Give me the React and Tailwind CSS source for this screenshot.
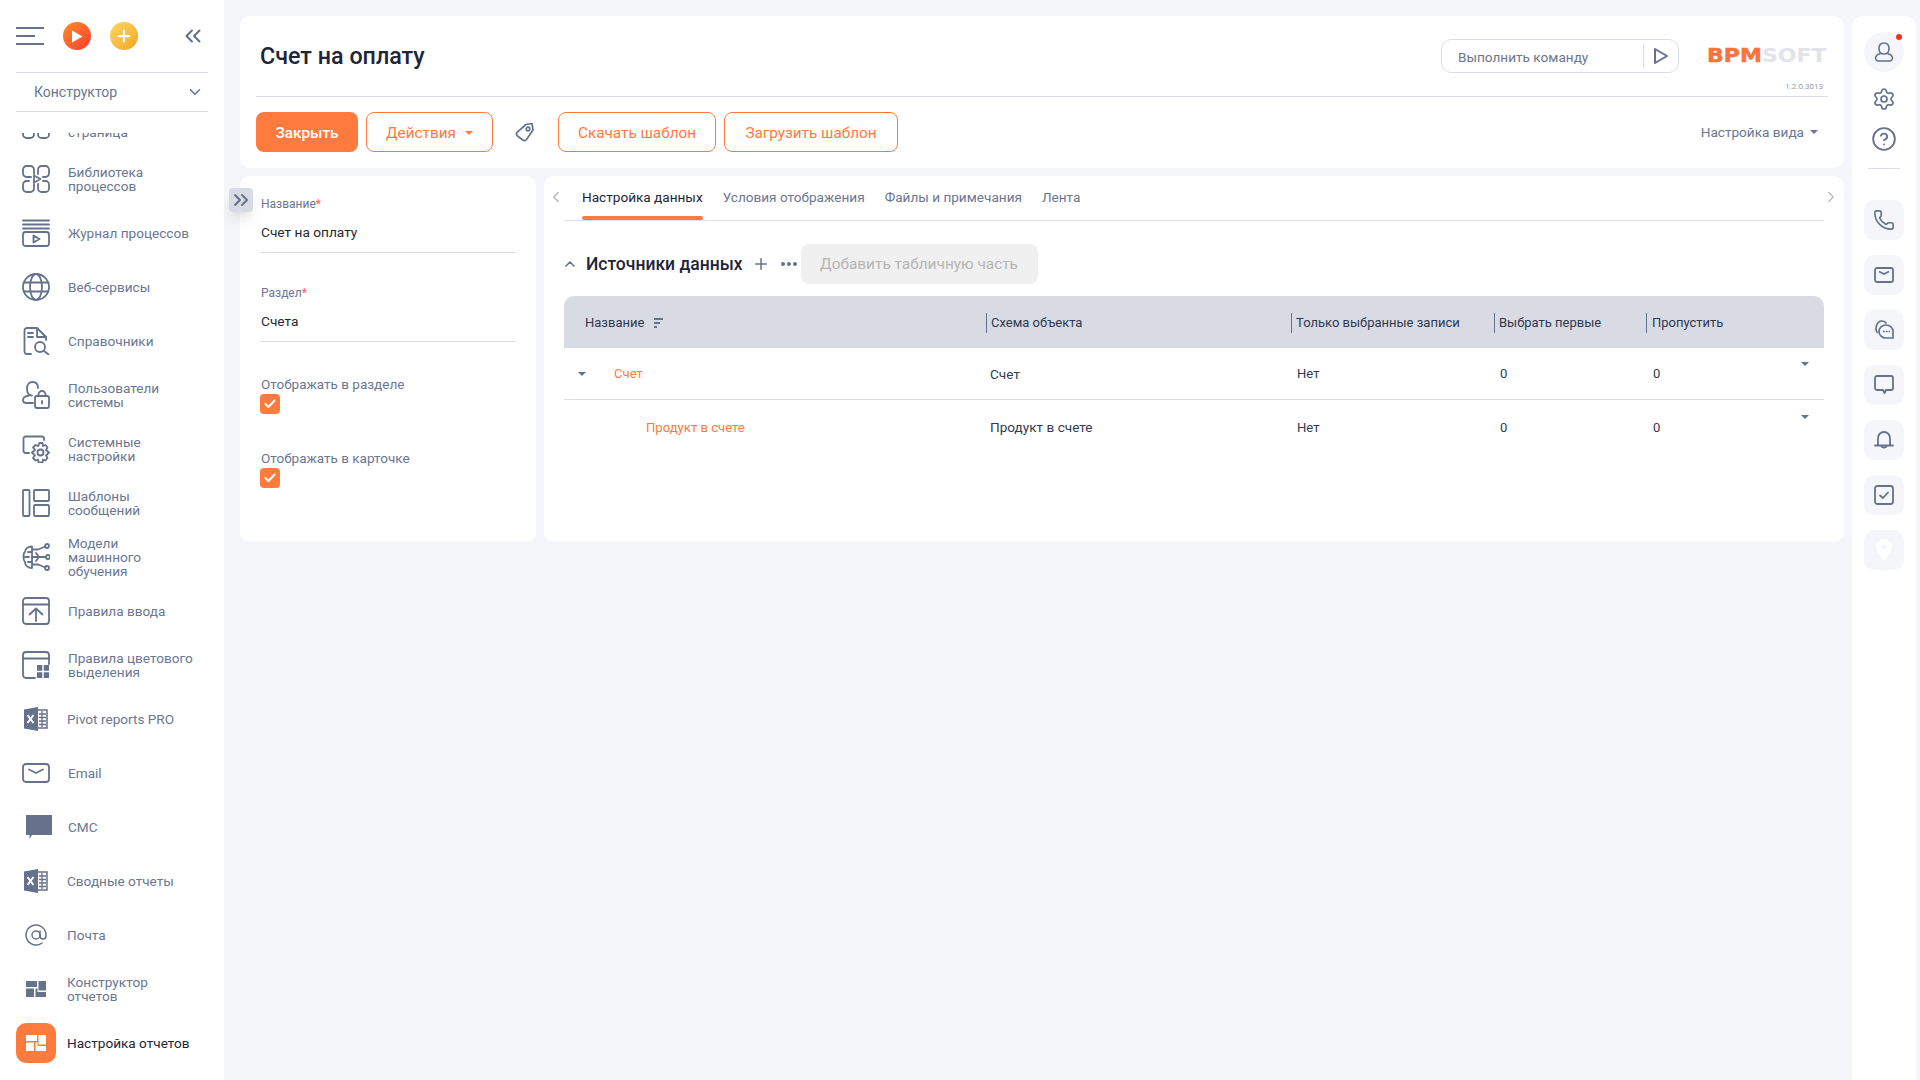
import { AtSign, ChevronDown, ChevronLeft, ChevronRight, ChevronUp, ChevronsLeft, ChevronsRight, Plus, Settings, CircleHelp, Phone } from "lucide-react";

const stroke = "#66718b";

function Ic({ children, className = "", size = 28 }) {
  return (
    <svg width={size} height={size} viewBox="0 0 28 28" fill="none" stroke="currentColor" strokeWidth="1.8" strokeLinecap="round" strokeLinejoin="round" className={className}>
      {children}
    </svg>
  );
}

const LibIcon = () => (
  <Ic>
    <path d="M12 9V4.5A3.5 3.5 0 0 0 8.500 1H4.500A3.500 3.500 0 0 0 1 4.500V8.500A3.500 3.500 0 0 0 4.500 12H9" />
    <path d="M16 9V4.500A3.500 3.500 0 0 1 19.500 1H23.500A3.500 3.500 0 0 1 27 4.500V8.500A3.500 3.500 0 0 1 23.500 12H21" />
    <path d="M7 16H4.500A3.500 3.500 0 0 0 1 19.500V23.500A3.500 3.500 0 0 0 4.500 27H8.500A3.500 3.500 0 0 0 12 23.500V19" />
    <path d="M21 16H23.500A3.500 3.500 0 0 1 27 19.500V23.500A3.500 3.500 0 0 1 23.500 27H19.500A3.500 3.500 0 0 1 16 23.500V19" />
    <path d="M12 10.500L18.500 14L12 17.500Z" />
  </Ic>
);
const LogIcon = () => (
  <Ic>
    <path d="M1 1.500H27M1 5.500H27M1 9.500H27" />
    <rect x="1" y="13" width="26" height="14" rx="2.500" />
    <path d="M11.500 16.500L17.500 20L11.500 23.500Z" />
  </Ic>
);
const GlobeIcon = () => (
  <Ic>
    <circle cx="14" cy="14" r="13" />
    <ellipse cx="14" cy="14" rx="6" ry="13" />
    <path d="M2 9.500H26M2 18.500H26" />
  </Ic>
);
const RefIcon = () => (
  <Ic>
    <path d="M9 27H5A2.500 2.500 0 0 1 2.500 24.500V3.500A2.500 2.500 0 0 1 5 1H15L24 10V13" />
    <path d="M15 1V10H24M6 6H11M6 10H11" />
    <circle cx="18" cy="20" r="5" />
    <path d="M22 24L26.500 27.500" />
  </Ic>
);
const UsersIcon = () => (
  <Ic>
    <path d="M10 14.500C6.500 14.500 5 11.500 5 7.500C5 3.500 7 1 10.500 1C14 1 16 3.500 16 7" />
    <path d="M7 14.500C4 15 1 16.500 1 19C1 21 3 22 5 22H11" />
    <rect x="13" y="15" width="14" height="12" rx="2" />
    <path d="M16.500 15V13.500A3.500 3.500 0 0 1 23.500 13.500V15" />
    <path d="M20 20V22.500" />
  </Ic>
);
const SysIcon = () => (
  <Ic>
    <path d="M7 18H3.500A2 2 0 0 1 1.500 16V3.500A2 2 0 0 1 3.500 1.500H20A2 2 0 0 1 22 3.500V5" />
    <path d="M17.500 8L20.500 8L21 11L23.500 10L25.500 12.500L24 15L27 17.500L24 20.500L25.500 23L23.500 25.500L21 24.500L20.500 27.500H16.500L16 24.500L13.500 25.500L11 23L13 20.500L10 17.500L13 15L11 12.500L13.500 10L16 11Z" />
    <circle cx="18.500" cy="17.500" r="3" />
  </Ic>
);
const TplIcon = () => (
  <Ic>
    <rect x="1" y="1" width="6.500" height="26" rx="1" />
    <rect x="12" y="1" width="15" height="11" rx="1" />
    <rect x="12" y="16" width="15" height="11" rx="1" />
  </Ic>
);
const MlIcon = () => (
  <Ic>
    <path d="M10 3.500C6 3.500 3 5.500 3 9C1 10 1 17 3 19C3 22.500 6 25 10 25V3.500Z" />
    <path d="M3 14H7M6 9H10M6 19H10" />
    <circle cx="25" cy="3" r="2" />
    <circle cx="26" cy="14" r="2" />
    <circle cx="25" cy="25" r="2" />
    <path d="M10 6.500H16L23.500 3.500M10 14H24M10 21.500H16L23.500 24.500M14 10L17 14M14 18L17 14" />
  </Ic>
);
const InputIcon = () => (
  <Ic>
    <rect x="1" y="1" width="26" height="26" rx="3" />
    <path d="M1 7.500H27M14 24V12M7.500 17.500L14 11.500L20.500 17.500" />
  </Ic>
);
const ColorIcon = () => (
  <Ic>
    <path d="M13 27H4A3 3 0 0 1 1 24V4A3 3 0 0 1 4 1H24A3 3 0 0 1 27 4V13" />
    <path d="M1 7.500H27" />
    <path d="M15 14H27V27H15Z" fill="currentColor" stroke="none" />
    <path d="M21 14V27M15 20.500H27" stroke="#fff" strokeWidth="1.500" />
  </Ic>
);
const ExcelIcon = () => (
  <svg width="24" height="24" viewBox="0 0 24 24" fill="none">
    <path d="M14 0L0 2.500V21.500L14 24Z" fill="currentColor" />
    <path d="M3.500 8L9.500 16M9.500 8L3.500 16" stroke="#fff" strokeWidth="2" />
    <path d="M14 3H23V21H14" stroke="currentColor" strokeWidth="1.500" />
    <path d="M15 7H22M15 10.500H22M15 14H22M15 17.500H22M18 4V20" stroke="currentColor" strokeWidth="1.300" />
  </svg>
);
const MailIcon = () => (
  <svg width="28" height="20" viewBox="0 0 28 20" fill="none" stroke="currentColor" strokeWidth="1.800" strokeLinecap="round" strokeLinejoin="round">
    <rect x="1" y="1" width="26" height="18" rx="3" />
    <path d="M7 6.500L14 10L21 6.500" />
  </svg>
);
const SmsIcon = () => (
  <svg width="26" height="24" viewBox="0 0 26 24" fill="currentColor" className="ml-[6px] shrink-0">
    <path d="M0 0H26V20H6L3.500 24V20H0Z" />
  </svg>
);
const TilesIcon = ({ fill = "currentColor" }) => (
  <svg width="20" height="16" viewBox="0 0 20 16" fill={fill}>
    <path d="M0 0H11V6H0ZM12.500 0H20V9.500H12.500V6H12.500ZM0 7.500H8V16H0ZM9.500 7.500H11.500V11H20V16H9.500Z" />
  </svg>
);

const items = [
  { label: ["Стартовая", "страница"], icon: <LibIcon /> },
  { label: ["Библиотека", "процессов"], icon: <LibIcon /> },
  { label: ["Журнал процессов"], icon: <LogIcon /> },
  { label: ["Веб-сервисы"], icon: <GlobeIcon /> },
  { label: ["Справочники"], icon: <RefIcon /> },
  { label: ["Пользователи", "системы"], icon: <UsersIcon /> },
  { label: ["Системные", "настройки"], icon: <SysIcon /> },
  { label: ["Шаблоны", "сообщений"], icon: <TplIcon /> },
  { label: ["Модели", "машинного", "обучения"], icon: <MlIcon /> },
  { label: ["Правила ввода"], icon: <InputIcon /> },
  { label: ["Правила цветового", "выделения"], icon: <ColorIcon /> },
  { label: ["Pivot reports PRO"], icon: <ExcelIcon />, shift: true },
  { label: ["Email"], icon: <MailIcon /> },
  { label: ["СМС"], icon: <SmsIcon /> },
  { label: ["Сводные отчеты"], icon: <ExcelIcon />, shift: true },
  { label: ["Почта"], icon: <AtSign size={24} strokeWidth={1.5} />, shift: true },
  { label: ["Конструктор", "отчетов"], icon: <TilesIcon />, shift: true },
];

function MenuItem({ item }) {
  return (
    <div className="flex h-[54px] items-center pl-[22px] text-[#6b7690]">
      <div className="flex h-7 w-7 shrink-0 items-center justify-center text-[#66718b]">{item.icon}</div>
      <div className={`text-[13.6px] leading-[14px] ${item.shift ? "ml-[17px]" : "ml-[18px]"}`}>
        {item.label.map((l) => (
          <div key={l}>{l}</div>
        ))}
      </div>
    </div>
  );
}

function Sidebar() {
  return (
    <div className="flex h-full w-[224px] shrink-0 flex-col bg-white">
      <div className="flex h-[72px] shrink-0 items-center pl-4 pr-[18px]">
        <div className="flex h-[18px] w-7 flex-col justify-between">
          <div className="h-[2px] w-7 bg-[#66718b]" />
          <div className="h-[2px] w-[19px] bg-[#66718b]" />
          <div className="h-[2px] w-7 bg-[#66718b]" />
        </div>
        <div className="ml-[19px] flex h-7 w-7 items-center justify-center rounded-full bg-gradient-to-br from-[#fb8c2c] to-[#f9302f]">
          <svg width="12" height="13" viewBox="0 0 12 13" fill="#fff"><path d="M1 0.500L11.500 6.500L1 12.500Z" /></svg>
        </div>
        <div className="ml-[19px] flex h-7 w-7 items-center justify-center rounded-full bg-gradient-to-br from-[#fbd765] to-[#f3a512]">
          <Plus size={18} color="#fff" strokeWidth={3} />
        </div>
        <ChevronsLeft size={26} color={stroke} strokeWidth={1.900} className="ml-auto" />
      </div>
      <div className="mx-4 flex h-10 shrink-0 items-center justify-between border-y border-[#dcdee6] pl-[18px] pr-[4px] text-[14px] text-[#6b7690]">
        <span>Конструктор</span>
        <ChevronDown size={18} color={stroke} strokeWidth={2} />
      </div>
      <div className="mt-[21px] flex-1 overflow-hidden">
        <div className="-mt-[35px]">
          {items.map((item) => (
            <MenuItem key={item.label[0]} item={item} />
          ))}
          <div className="flex h-[54px] items-center pl-4">
            <div className="flex h-10 w-10 items-center justify-center rounded-[10px] bg-[#ff7a3d]">
              <TilesIcon fill="#fff" />
            </div>
            <span className="ml-[11px] text-[13.6px] text-[#1e2536]">Настройка отчетов</span>
          </div>
        </div>
      </div>
    </div>
  );
}

function OutlineButton({ children, className = "" }) {
  return (
    <button className={`flex h-10 items-center justify-center rounded-[8px] border border-[#ff7a3d] pt-[2px] text-[15.3px] text-[#ff7a3d] ${className}`}>
      {children}
    </button>
  );
}

function Caret({ className = "" }) {
  return <span className={`inline-block h-0 w-0 border-x-[4px] border-t-[4px] border-x-transparent border-t-current ${className}`} />;
}

function Header() {
  return (
    <div className="h-[152px] rounded-[10px] bg-white px-4">
      <div className="flex h-[81px] items-start border-b border-[#dcdee6] pt-[23px]">
        <h1 className="flex-1 pl-1 text-[23.3px] font-medium leading-[34px] text-[#1e2536]">Счет на оплату</h1>
        <div className="flex h-[34px] w-[238px] items-center rounded-[10px] border border-[#dcdee6] pl-4 text-[13.6px] text-[#6b7690]">
          <span className="flex-1 pt-[2px]">Выполнить команду</span>
          <div className="flex h-6 w-[35px] items-center justify-center border-l border-[#dcdee6]">
            <svg width="16" height="18" viewBox="0 0 16 18" fill="none" stroke={stroke} strokeWidth="2" strokeLinejoin="round"><path d="M2 2L14 9L2 16Z" /></svg>
          </div>
        </div>
        <div className="ml-[28px] w-[121px]">
          <div className="mt-[6px] flex h-5 origin-left scale-x-[1.16] items-center font-['DejaVu_Sans',sans-serif] text-[19px] font-bold leading-5">
            <span className="text-[#f9733a] [-webkit-text-stroke:0.5px_#f9733a]">BPM</span>
            <span className="text-[#e2e4ea]">SOFT</span>
          </div>
          <div className="mt-[17px] pr-[5px] text-right text-[8px] leading-[10px] text-[#9a9ea8]">1.2.0.3013</div>
        </div>
      </div>
      <div className="flex items-center pt-[15px]">
        <button className="flex h-10 w-[102px] items-center justify-center rounded-[8px] bg-[#ff7a3d] pt-[2px] text-[15.3px] font-medium text-white">Закрыть</button>
        <OutlineButton className="ml-2 w-[127px]">
          Действия
          <Caret className="ml-[9px]" />
        </OutlineButton>
        <div className="flex w-[65px] justify-center pr-[2px]">
          <svg width="20" height="20" viewBox="0 0 20 20" fill="none" stroke={stroke} strokeWidth="1.700" strokeLinejoin="round">
            <path d="M11 2.500L17 1.500L18 8L11.500 17.500C10.500 18.800 9 19 7.800 18L2.500 14C1.300 13 1 11.500 2 10.300Z" />
            <circle cx="13" cy="7" r="1.800" />
          </svg>
        </div>
        <OutlineButton className="w-[158px]">Скачать шаблон</OutlineButton>
        <OutlineButton className="ml-2 w-[174px]">Загрузить шаблон</OutlineButton>
        <div className="ml-auto mr-[10px] flex items-center pt-px text-[13.6px] text-[#6b7690]">
          Настройка вида
          <Caret className="ml-[6px]" />
        </div>
      </div>
    </div>
  );
}

function TextField({ label, value, className = "" }) {
  return (
    <div className={className}>
      <div className="pl-px text-[12px] leading-4 text-[#6b7690]">
        {label}
        <span className="text-[#ff5a5a]">*</span>
      </div>
      <div className="flex h-[41px] items-center border-b border-[#dcdee6] pl-px text-[13.7px] text-[#1e2536]">{value}</div>
    </div>
  );
}

function CheckField({ label, className = "" }) {
  return (
    <div className={className}>
      <div className="pl-px text-[13.5px] leading-4 text-[#6b7690]">{label}</div>
      <div className="mt-[2px] flex h-5 w-5 items-center justify-center rounded-[4px] bg-[#ff7a3d]">
        <svg width="12" height="10" viewBox="0 0 12 10" fill="none" stroke="#fff" strokeWidth="2" strokeLinecap="round" strokeLinejoin="round"><path d="M1.500 5L4.500 8L10.500 1.500" /></svg>
      </div>
    </div>
  );
}

function FormCard() {
  return (
    <div className="relative h-[366px] w-[296px] shrink-0 rounded-[10px] bg-white px-5 pt-5">
      <div className="absolute left-[-11px] top-3 flex h-6 w-6 items-center justify-center rounded-[4px] bg-[#d8dbe3] shadow-lg">
        <ChevronsRight size={24} color={stroke} strokeWidth={2} />
      </div>
      <TextField label="Название" value="Счет на оплату" />
      <TextField label="Раздел" value="Счета" className="mt-[32px]" />
      <CheckField label="Отображать в разделе" className="mt-[34px]" />
      <CheckField label="Отображать в карточке" className="mt-[36px]" />
    </div>
  );
}

const tabs = ["Настройка данных", "Условия отображения", "Файлы и примечания", "Лента"];
const cols = ["Схема объекта", "Только выбранные записи", "Выбрать первые", "Пропустить"];
const rowGrid = "grid grid-cols-[422px_305px_203px_152px_1fr]";

function Row({ name, schema, indent, border }) {
  return (
    <div className={`${rowGrid} h-[52px] items-center text-[13.1px] text-[#333b4f] ${border ? "border-b border-[#dcdee6] pt-px" : "pt-[3px]"}`}>
      <div className={`flex items-center text-[#ff7a3d] ${indent ? "pl-[82px]" : "pl-[14px]"}`}>
        {!indent && <Caret className="mr-[28px] text-[#66718b]" />}
        <span>{name}</span>
      </div>
      <div className="pl-1 text-[13.6px]">{schema}</div>
      <div className="pl-[6px]">Нет</div>
      <div className="pl-[6px]">0</div>
      <div className="flex h-full justify-between pl-[7px] pr-[15px]">
        <span className="self-center">0</span>
        <Caret className={indent ? "mt-[12px] text-[#66718b]" : "mt-[13px] text-[#66718b]"} />
      </div>
    </div>
  );
}

function DataCard() {
  return (
    <div className="relative h-[366px] flex-1 rounded-[10px] bg-white px-5">
      <ChevronLeft size={18} color="#b5b8c0" strokeWidth={2} className="absolute left-[3px] top-3" />
      <ChevronRight size={18} color="#b5b8c0" strokeWidth={1.500} className="absolute right-1 top-3" />
      <div className="flex h-[45px] gap-5 border-b border-[#e0e1e5] pl-[18px] text-[13.6px]">
        {tabs.map((t, i) => (
          <div key={t} className="flex flex-col">
            <div className={`mt-[11px] h-5 leading-5 ${i === 0 ? "text-[#1e2536]" : "text-[#6b7690]"}`}>{t}</div>
            {i === 0 && <div className="mt-[9px] h-1 rounded-sm bg-[#ff7a3d]" />}
          </div>
        ))}
      </div>
      <div className="mt-[23px] flex h-10 items-center">
        <ChevronUp size={16} color={stroke} strokeWidth={2.500} className="-ml-[2px]" />
        <h2 className="ml-[8px] pt-px text-[17.5px] font-medium text-[#1e2536]">Источники данных</h2>
        <Plus size={18} color={stroke} strokeWidth={2} className="ml-[9px]" />
        <div className="ml-[11px] flex gap-[2px]">
          <div className="h-[4px] w-[4px] rounded-full bg-[#66718b]" />
          <div className="h-[4px] w-[4px] rounded-full bg-[#66718b]" />
          <div className="h-[4px] w-[4px] rounded-full bg-[#66718b]" />
        </div>
        <button className="ml-[4px] h-10 w-[237px] rounded-[8px] bg-[#f0f0f0] pt-px text-[15.4px] text-[#b4b4b4]">Добавить табличную часть</button>
      </div>
      <div className={`${rowGrid} mt-3 h-[52px] items-center rounded-t-[10px] bg-[#d8dbe3] pt-px text-[13px] text-[#2f3850]`}>
        <div className="flex items-center pl-[21px]">
          Название
          <svg width="9" height="10" viewBox="0 0 9 10" fill="#66718b" className="ml-[10px]"><path d="M0 0H9V2H0ZM0 4H6V6H0ZM0 8H3V10H0Z" /></svg>
        </div>
        {cols.map((c, i) => (
          <div key={c} className={`flex h-5 items-center border-l border-[#66718b] ${i === 3 ? "pl-[5px]" : "pl-1"}`}>{c}</div>
        ))}
      </div>
      <Row name="Счет" schema="Счет" border />
      <Row name="Продукт в счете" schema="Продукт в счете" indent />
    </div>
  );
}

const toolIcons = [
  <Phone key="phone" size={22} color={stroke} strokeWidth={1.800} />,
  <svg key="mail" width="20" height="16" viewBox="0 0 20 16" fill="none" stroke={stroke} strokeWidth="1.800" strokeLinejoin="round"><rect x="1" y="1" width="18" height="14" rx="2" /><path d="M5 4.500L10 7L15 4.500" /></svg>,
  <svg key="chat" width="20" height="20" viewBox="0 0 20 20" fill="none" stroke={stroke} strokeWidth="1.700" strokeLinejoin="round"><path d="M3.500 13C0.500 9 2.500 1 8 1C10 1 11.500 2 12.500 3.500" /><path d="M12 5C8 5 5 8 5 11.500C5 15 8 18 12 18H19V11.500C19 8 16 5 12 5Z" /><path d="M9 11.500H16" strokeDasharray="1.800 1" /></svg>,
  <svg key="msg" width="20" height="20" viewBox="0 0 20 20" fill="none" stroke={stroke} strokeWidth="1.800" strokeLinejoin="round"><path d="M3 1H17A2 2 0 0 1 19 3V13A2 2 0 0 1 17 15H12L10.500 18L9 15H3A2 2 0 0 1 1 13V3A2 2 0 0 1 3 1Z" /></svg>,
  <svg key="bell" width="20" height="20" viewBox="0 0 20 20" fill="none" stroke={stroke} strokeWidth="1.800" strokeLinejoin="round" strokeLinecap="round"><path d="M4 15V8A6 6 0 0 1 16 8V15" /><path d="M1 15.500H19M7.500 16.500C8 18 12 18 12.500 16.500" /></svg>,
  <svg key="check" width="20" height="20" viewBox="0 0 20 20" fill="none" stroke={stroke} strokeWidth="1.800" strokeLinejoin="round" strokeLinecap="round"><rect x="1" y="1" width="18" height="18" rx="2.500" /><path d="M6 10.500L9 13L14 7.500" /></svg>,
  <svg key="pin" width="16" height="22" viewBox="0 0 16 22" fill="#ffffff"><path fillRule="evenodd" d="M8 0A8 8 0 0 1 16 8C16 12 11 18 8 22C5 18 0 12 0 8A8 8 0 0 1 8 0ZM8 5.500A2.500 2.500 0 1 0 8 10.500A2.500 2.500 0 1 0 8 5.500Z" /></svg>,
];

function RightPanel() {
  return (
    <div className="ml-2 mt-4 flex w-[64px] shrink-0 flex-col items-center rounded-t-[10px] bg-white pt-4">
      <div className="relative flex h-10 w-10 items-center justify-center rounded-full bg-[#f5f6fa]">
        <svg width="20" height="20" viewBox="0 0 20 20" fill="none" stroke={stroke} strokeWidth="1.600" strokeLinejoin="round" className="-ml-px"><path d="M10 1C6.500 1 5 3.500 5 6.500C5 9.500 6.500 12 10 12C13.500 12 15 9.500 15 6.500C15 3.500 13.500 1 10 1Z" /><path d="M6.500 11.500C3.500 12.500 1.500 14 1.500 16C1.500 18 3.500 19 5 19H15C16.500 19 18.500 18 18.500 16C18.500 14 16.500 12.500 13.500 11.500" /></svg>
        <div className="absolute right-[2px] top-[2px] h-[6px] w-[6px] rounded-full bg-[#ff2d1a]" />
      </div>
      <Settings size={24} color={stroke} strokeWidth={1.700} className="mt-[15px]" />
      <CircleHelp size={26} color={stroke} strokeWidth={1.700} className="mt-[15px]" />
      <div className="mt-4 h-px w-8 bg-[#dcdee6]" />
      <div className="mt-[31px] flex flex-col gap-[15px]">
        {toolIcons.map((icon) => (
          <div key={icon.key} className="flex h-10 w-10 items-center justify-center rounded-[10px] bg-[#f5f6fa]">{icon}</div>
        ))}
      </div>
    </div>
  );
}

export default function App() {
  return (
    <div className="flex h-screen overflow-hidden bg-[#f5f6fa] font-['Roboto',sans-serif]">
      <Sidebar />
      <div className="ml-4 mt-4 w-[1604px] shrink-0">
        <Header />
        <div className="mt-2 flex gap-2">
          <FormCard />
          <DataCard />
        </div>
      </div>
      <RightPanel />
    </div>
  );
}
